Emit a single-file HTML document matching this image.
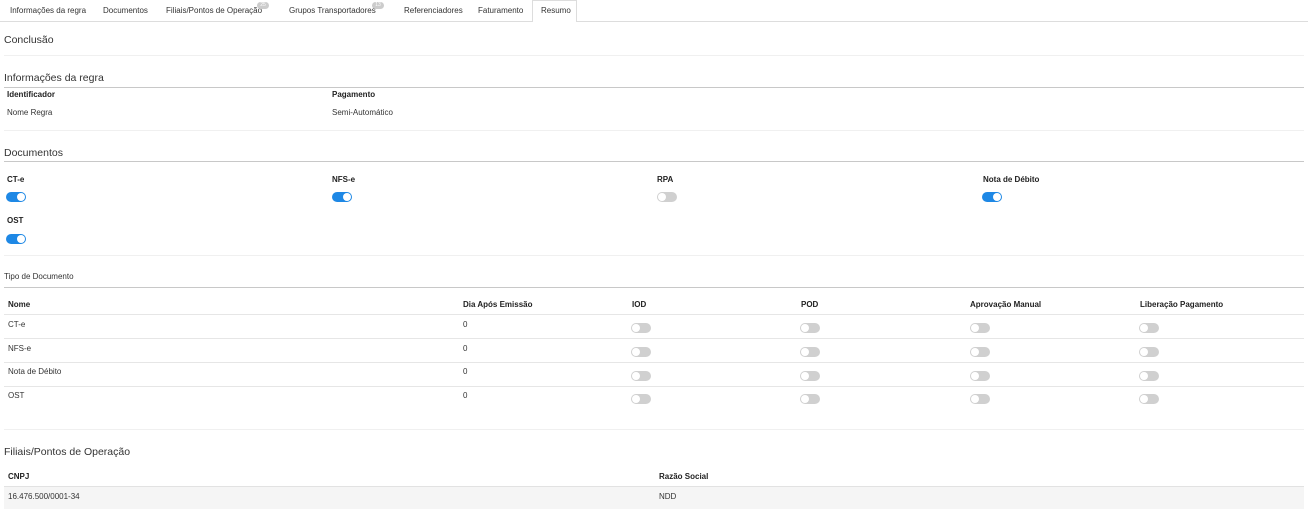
<!DOCTYPE html>
<html><head><meta charset="utf-8"><style>
*{margin:0;padding:0;box-sizing:border-box}
body{width:1308px;height:522px;background:#fff;font-family:"Liberation Sans",sans-serif;color:#333;position:relative;overflow:hidden;font-size:8px}
.a{position:absolute;white-space:nowrap}
.h{font-size:10.5px;color:#333}
.b{font-weight:bold;font-size:8px;color:#222}
.ln{position:absolute;left:4px;right:4px;height:1px;background:#f0f0f0}
.dk{background:#c8c8c8}
.t{position:absolute;width:20px;height:10px;border-radius:5px;background:#1e88e5}
.t::after{content:"";position:absolute;right:1px;top:1px;width:8px;height:8px;border-radius:50%;background:#fff}
.o{background:#d0d0d0}
.o::after{left:1px;right:auto}
.tab{position:absolute;top:6px;font-size:8px;color:#333}
.badge{position:absolute;top:2px;width:12px;height:7px;border-radius:4px;background:#ccc;color:#fff;font-size:5px;text-align:center;line-height:7px}
</style></head><body>
<div style="position:absolute;left:0;right:0;top:21px;height:1px;background:#ddd"></div>
<div style="position:absolute;left:532px;top:0;width:45px;height:22px;background:#fff;border:1px solid #ddd;border-bottom:none"></div>
<div class="tab" style="left:10px">Informações da regra</div>
<div class="tab" style="left:103px">Documentos</div>
<div class="tab" style="left:166px">Filiais/Pontos de Operação</div><div class="badge" style="left:257px">25</div>
<div class="tab" style="left:289px">Grupos Transportadores</div><div class="badge" style="left:372px">13</div>
<div class="tab" style="left:404px">Referenciadores</div>
<div class="tab" style="left:478px">Faturamento</div>
<div class="tab" style="left:541px">Resumo</div>

<div class="a h" style="left:4px;top:34px">Conclusão</div>
<div class="ln" style="top:55px"></div>
<div class="a h" style="left:4px;top:72px">Informações da regra</div>
<div class="ln dk" style="top:87px"></div>
<div class="a b" style="left:7px;top:90px">Identificador</div>
<div class="a b" style="left:332px;top:90px">Pagamento</div>
<div class="a" style="left:7px;top:108px">Nome Regra</div>
<div class="a" style="left:332px;top:108px">Semi-Automático</div>
<div class="ln" style="top:130px"></div>

<div class="a h" style="left:4px;top:147px">Documentos</div>
<div class="ln dk" style="top:161px"></div>
<div class="a b" style="left:7px;top:175px">CT-e</div>
<div class="a b" style="left:332px;top:175px">NFS-e</div>
<div class="a b" style="left:657px;top:175px">RPA</div>
<div class="a b" style="left:983px;top:175px">Nota de Débito</div>
<div class="t" style="left:6px;top:192px"></div>
<div class="t" style="left:332px;top:192px"></div>
<div class="t o" style="left:657px;top:192px"></div>
<div class="t" style="left:982px;top:192px"></div>
<div class="a b" style="left:7px;top:216px">OST</div>
<div class="t" style="left:6px;top:234px"></div>
<div class="ln" style="top:255px"></div>

<div class="a" style="left:4px;top:272px">Tipo de Documento</div>
<div class="ln dk" style="top:287px"></div>
<div class="a b" style="left:8px;top:300px">Nome</div>
<div class="a b" style="left:463px;top:300px">Dia Após Emissão</div>
<div class="a b" style="left:632px;top:300px">IOD</div>
<div class="a b" style="left:801px;top:300px">POD</div>
<div class="a b" style="left:970px;top:300px">Aprovação Manual</div>
<div class="a b" style="left:1140px;top:300px">Liberação Pagamento</div>
<div class="ln" style="top:314px;background:#e6e6e6"></div>

<div class="a" style="left:8px;top:320px">CT-e</div><div class="a" style="left:463px;top:320px">0</div>
<div class="ln" style="top:338px;background:#e6e6e6"></div>
<div class="a" style="left:8px;top:344px">NFS-e</div><div class="a" style="left:463px;top:344px">0</div>
<div class="ln" style="top:362px;background:#e6e6e6"></div>
<div class="a" style="left:8px;top:367px">Nota de Débito</div><div class="a" style="left:463px;top:367px">0</div>
<div class="ln" style="top:386px;background:#e6e6e6"></div>
<div class="a" style="left:8px;top:391px">OST</div><div class="a" style="left:463px;top:391px">0</div>

<div class="t o" style="left:631px;top:323px"></div><div class="t o" style="left:800px;top:323px"></div><div class="t o" style="left:970px;top:323px"></div><div class="t o" style="left:1139px;top:323px"></div>
<div class="t o" style="left:631px;top:347px"></div><div class="t o" style="left:800px;top:347px"></div><div class="t o" style="left:970px;top:347px"></div><div class="t o" style="left:1139px;top:347px"></div>
<div class="t o" style="left:631px;top:371px"></div><div class="t o" style="left:800px;top:371px"></div><div class="t o" style="left:970px;top:371px"></div><div class="t o" style="left:1139px;top:371px"></div>
<div class="t o" style="left:631px;top:394px"></div><div class="t o" style="left:800px;top:394px"></div><div class="t o" style="left:970px;top:394px"></div><div class="t o" style="left:1139px;top:394px"></div>
<div class="ln" style="top:429px"></div>

<div class="a h" style="left:4px;top:446px">Filiais/Pontos de Operação</div>
<div class="a b" style="left:8px;top:472px">CNPJ</div>
<div class="a b" style="left:659px;top:472px">Razão Social</div>
<div style="position:absolute;left:4px;right:4px;top:486px;height:23px;background:#f5f5f5;border-top:1px solid #e2e2e2"></div>
<div class="a" style="left:8px;top:492px">16.476.500/0001-34</div>
<div class="a" style="left:659px;top:492px">NDD</div>
</body></html>
